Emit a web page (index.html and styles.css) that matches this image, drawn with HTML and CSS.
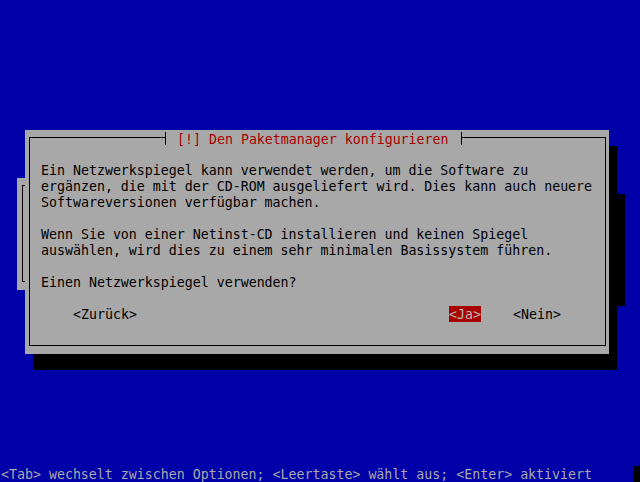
FILE: index.html
```html
<!DOCTYPE html>
<html lang="de">
<head>
<meta charset="utf-8">
<title>Den Paketmanager konfigurieren</title>
<link rel="stylesheet" href="styles.css">
</head>
<body>
<div class="screen">
  <div class="window back-window"><div class="frame"></div></div>
  <div class="window dialog">
    <div class="frame">
      <div class="title">[!] Den Paketmanager konfigurieren</div>
      <p class="msg">Ein Netzwerkspiegel kann verwendet werden, um die Software zu<br>ergänzen, die mit der CD-ROM ausgeliefert wird. Dies kann auch neuere<br>Softwareversionen verfügbar machen.</p>
      <p class="msg">Wenn Sie von einer Netinst-CD installieren und keinen Spiegel<br>auswählen, wird dies zu einem sehr minimalen Basissystem führen.</p>
      <p class="msg">Einen Netzwerkspiegel verwenden?</p>
      <div class="buttons">
        <span class="btn btn-back">&lt;Zurück&gt;</span>
        <span class="btn btn-yes">&lt;Ja&gt;</span>
        <span class="btn btn-no">&lt;Nein&gt;</span>
      </div>
    </div>
  </div>
  <div class="status">&lt;Tab&gt; wechselt zwischen Optionen; &lt;Leertaste&gt; wählt aus; &lt;Enter&gt; aktiviert</div>
  <div class="cursor"></div>
</div>
</body>
</html>
```

FILE: styles.css
```css
html, body {
  margin: 0;
  padding: 0;
  background: #0000a8;
  overflow: hidden;
}

.screen {
  width: 640px;
  height: 482px;
  box-sizing: border-box;
  padding: 2px 0 0 1px;
  display: grid;
  grid-template-columns: repeat(80, 8px);
  grid-template-rows: repeat(30, 16px);
  font-family: "DejaVu Sans Mono", "Liberation Mono", monospace;
  font-size: 13.288px;
  color: #000;
  background: #0000a8;
}

.window {
  background: #a8a8a8;
  box-shadow: 8px 16px 0 0 #000;
  display: flex;
  flex-direction: column;
  min-width: 0;
}

.back-window {
  grid-column: 3 / 78;
  grid-row: 12 / 19;
}

.back-window .frame {
  flex: 1;
  margin: 7px 3px 8px 5px;
  border: 1px solid #000;
}

.dialog {
  grid-column: 4 / 77;
  grid-row: 9 / 23;
}

.dialog .frame {
  flex: 1;
  position: relative;
  margin: 7px 3px 8px 4px;
  border: 1px solid #000;
  padding: 24px 0 0 11px;
}

.title {
  position: absolute;
  left: 135px;
  top: -6px;
  width: 297px;
  height: 13px;
  box-sizing: border-box;
  padding: 1px 0 0 11px;
  border-left: 1px solid #000;
  border-right: 1px solid #000;
  background: #a8a8a8;
  color: #a80000;
  line-height: 13px;
  white-space: pre;
}

.msg {
  margin: 0 0 15px;
  padding-top: 1px;
  line-height: 16px;
  white-space: nowrap;
}

.buttons {
  display: flex;
  height: 16px;
}

.btn {
  display: block;
  height: 16px;
  box-sizing: border-box;
  padding-top: 1px;
  line-height: 15px;
  white-space: pre;
}

.btn-back {
  margin-left: 32px;
  width: 64px;
}

.btn-yes {
  margin-left: 312px;
  width: 32px;
  background: #a80000;
  color: #b8b8b8;
}

.btn-no {
  margin-left: 32px;
  width: 48px;
}

.status {
  grid-column: 1 / 80;
  grid-row: 30;
  color: #a8a8a8;
  padding-top: 1px;
  line-height: 15px;
  white-space: pre;
}

.cursor {
  grid-column: 80;
  grid-row: 30;
  background: #000;
}
```
